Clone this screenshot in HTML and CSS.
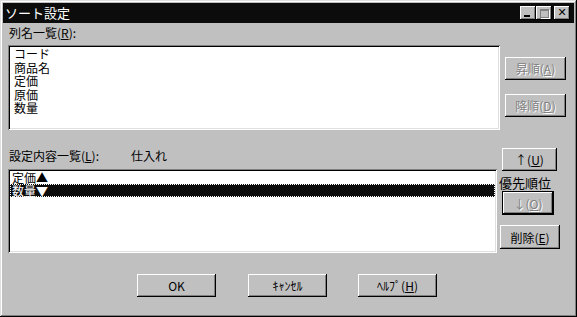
FILE: index.html
```html
<!DOCTYPE html>
<html lang="ja">
  <head>
    <meta charset="UTF-8" />
    <title>ソート設定</title>
    <link rel="stylesheet" href="styles.css">
  </head>
  <body>
    <div class="window">
      <div class="titlebar">
        <span class="caption">ソート設定</span>
        <div class="caption-buttons">
          <span class="cbtn"><span class="min-glyph"></span></span>
          <span class="cbtn"><span class="max-glyph"></span></span>
          <span class="cbtn close">✕</span>
        </div>
      </div>

      <div class="main">
        <div class="section">
          <div class="left">
            <div class="label">列名一覧(<u>R</u>):</div>
            <div class="listbox list-columns">
              <div class="item">コード</div>
              <div class="item">商品名</div>
              <div class="item">定価</div>
              <div class="item">原価</div>
              <div class="item">数量</div>
            </div>
          </div>
          <div class="side side-top">
            <button class="btn wide disabled">昇順(<u>A</u>)</button>
            <button class="btn wide disabled">降順(<u>D</u>)</button>
          </div>
        </div>

        <div class="section second">
          <div class="left">
            <div class="label">設定内容一覧(<u>L</u>):<span class="source">仕入れ</span></div>
            <div class="listbox list-sort">
              <div class="item">定価▲</div>
              <div class="item selected">数量▼</div>
            </div>
          </div>
          <div class="side side-bottom">
            <button class="btn up">↑(<u>U</u>)</button>
            <div class="priority">優先順位</div>
            <button class="btn down default disabled">↓(<u>O</u>)</button>
            <button class="btn remove">削除(<u>E</u>)</button>
          </div>
        </div>

        <div class="footer">
          <button class="btn footer-btn">OK</button>
          <button class="btn footer-btn">ｷｬﾝｾﾙ</button>
          <button class="btn footer-btn">ﾍﾙﾌﾟ(<u>H</u>)</button>
        </div>
      </div>
    </div>
  </body>
</html>
```

FILE: styles.css
```css
body {
  margin: 0;
  background: #c0c0c0;
  font-family: "Noto Sans CJK JP", "Liberation Sans", sans-serif;
  font-size: 12px;
  color: #000;
}
.window {
  box-sizing: border-box;
  width: 577px;
  height: 317px;
  padding: 3px;
  background: #c0c0c0;
  box-shadow: inset -1px -1px #000, inset 1px 1px #dfdfdf,
    inset -2px -2px #808080, inset 2px 2px #fff;
}
.titlebar {
  height: 20px;
  background: #0c0c0c;
  display: flex;
  align-items: center;
  justify-content: space-between;
}
.caption {
  color: #fff;
  font-size: 13px;
  padding-left: 2px;
  line-height: 20px;
}
.caption-buttons {
  display: flex;
  margin-right: 4px;
}
.cbtn {
  box-sizing: border-box;
  width: 16px;
  height: 14px;
  background: #c0c0c0;
  box-shadow: inset -1px -1px #000, inset 1px 1px #fff, inset -2px -2px #808080;
  display: flex;
  align-items: center;
  justify-content: center;
}
.cbtn.close {
  margin-left: 2px;
  font-size: 11px;
  font-weight: bold;
  font-family: "DejaVu Sans", sans-serif;
  line-height: 14px;
}
.min-glyph {
  width: 6px;
  height: 2px;
  background: #000;
  margin-top: 6px;
  margin-left: -2px;
}
.max-glyph {
  box-sizing: border-box;
  width: 9px;
  height: 9px;
  border: 1px solid #808080;
  border-top-width: 2px;
  box-shadow: 1px 1px #fff;
}
.main {
  padding-left: 5px;
}
.section {
  display: flex;
}
.left {
  display: flex;
  flex-direction: column;
}
.label {
  height: 16px;
  line-height: 16px;
  margin-top: 2px;
  margin-left: 1px;
}
.source {
  margin-left: 32px;
}
.listbox {
  box-sizing: border-box;
  background: #fff;
  padding: 2px;
  box-shadow: inset 1px 1px #808080, inset -1px -1px #fff,
    inset 2px 2px #000, inset -2px -2px #dfdfdf;
}
.list-columns {
  width: 492px;
  height: 85px;
  margin-top: 4px;
  padding-top: 2px;
}
.list-columns .item {
  line-height: 13.5px;
  height: 13.5px;
  padding-left: 4px;
}
.second .label {
  margin-top: 18px;
}
.list-sort {
  width: 489px;
  height: 84px;
  margin-top: 5px;
}
.list-sort .item {
  height: 13px;
  line-height: 13px;
  padding-left: 2px;
}
.item.selected {
  box-sizing: border-box;
  background: #0c0c0c;
  color: #fff;
  border: 1px dotted #fff;
  line-height: 11px;
  padding-left: 1px;
}
.side {
  display: flex;
  flex-direction: column;
  align-items: flex-start;
}
.side-top {
  margin-left: 5px;
  margin-top: 34px;
  gap: 14px;
}
.side-bottom {
  margin-top: 18px;
}
.btn {
  box-sizing: border-box;
  height: 23px;
  padding: 0;
  border: none;
  background: #c0c0c0;
  font-family: inherit;
  font-size: 12px;
  color: #000;
  box-shadow: inset -1px -1px #000, inset 1px 1px #fff, inset -2px -2px #808080;
}
.btn u {
  text-decoration-thickness: 1px;
}
.btn.disabled {
  color: #808080;
  text-shadow: 1px 1px #fff;
}
.wide {
  width: 61px;
}
.up {
  width: 55px;
  margin-left: 5px;
}
.priority {
  height: 15px;
  line-height: 15px;
  margin-top: 4px;
  margin-left: 2px;
  font-size: 13px;
}
.down {
  width: 52px;
  height: 24px;
  margin-left: 5px;
  margin-top: 1px;
}
.btn.default {
  box-shadow: inset -1px -1px #000, inset 1px 1px #000, inset -2px -2px #000,
    inset 2px 2px #fff, inset -3px -3px #808080;
}
.remove {
  width: 60px;
  height: 24px;
  margin-left: 3px;
  margin-top: 10px;
}
.footer {
  display: flex;
  padding-left: 129px;
  margin-top: 21px;
  gap: 31px;
}
.footer-btn {
  width: 79px;
}
.footer-btn + .footer-btn {
  margin-left: 1px;
}
.footer-btn + .footer-btn + .footer-btn {
  margin-left: 0;
}
```
